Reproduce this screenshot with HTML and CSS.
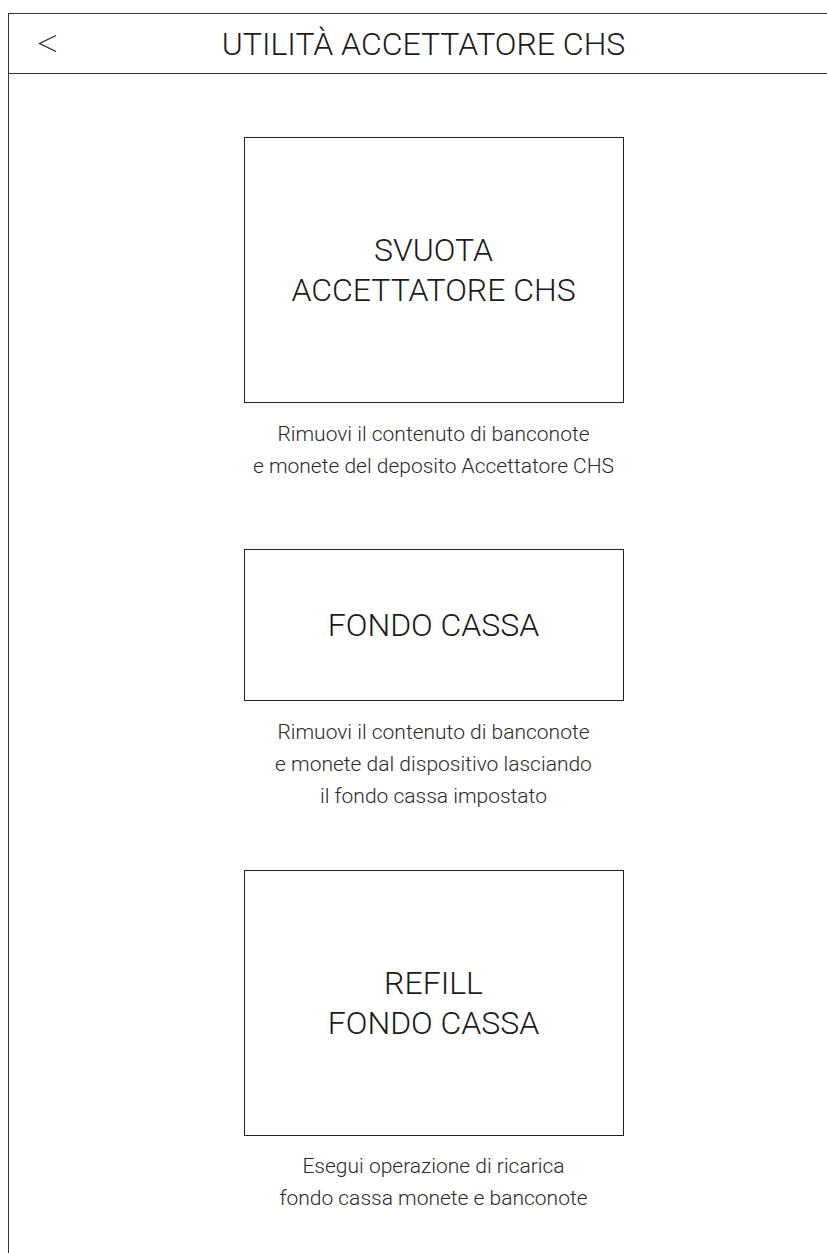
FILE: index.html
```html
<!doctype html>
<html>
<head>
<meta charset="utf-8">
<title>Utilità Accettatore CHS</title>
<link rel="stylesheet" href="styles.css">
</head>

<body>
<div class="frame">
	<div class="header">
		<a class="back" href="#"><svg width="20" height="20" viewBox="0 0 20 20"><polyline points="18,1.5 1.5,9.5 18,17.5" fill="none" stroke="#222" stroke-width="1.2"/></svg></a>
		<h1 class="title">UTILITÀ ACCETTATORE CHS</h1>
	</div>
	<div class="content">
		<div class="item item-1">
			<a class="tile tile-big" href="#">SVUOTA<br>ACCETTATORE CHS</a>
			<p class="desc">Rimuovi il contenuto di banconote<br>e monete del deposito Accettatore CHS</p>
		</div>
		<div class="item item-2">
			<a class="tile tile-small" href="#">FONDO CASSA</a>
			<p class="desc">Rimuovi il contenuto di banconote<br>e monete dal dispositivo lasciando<br>il fondo cassa impostato</p>
		</div>
		<div class="item item-3">
			<a class="tile tile-big" href="#">REFILL<br>FONDO CASSA</a>
			<p class="desc">Esegui operazione di ricarica<br>fondo cassa monete e banconote</p>
		</div>
	</div>
</div>
</body>
</html>
```

FILE: styles.css
```css
* {margin:0; padding:0; box-sizing:border-box;}
html, body {background:#fff; overflow:hidden;}
body {font-family:Roboto, "Liberation Sans", sans-serif; font-weight:300; color:#1a1a1a;}
a {color:inherit; text-decoration:none;}

.frame {width:851px; min-height:1300px; margin:13px 0 0 8px; border:1px solid #333;}

.header {display:flex; align-items:center; height:60px; border-bottom:1px solid #333;}
.back {display:flex; width:60px; padding-left:29px;}
.title {flex:1; padding-right:80px; text-align:center; font-size:32px; font-weight:300;}

.content {display:flex; flex-direction:column; align-items:center; padding-top:63px;}
.item {display:flex; flex-direction:column; align-items:center;}

.tile {display:flex; align-items:center; justify-content:center; width:380px; border:1px solid #222; text-align:center; font-size:32px; line-height:40px;}
.tile-big {height:266px;}
.tile-small {height:152px;}

.desc {padding-top:15px; text-align:center; font-size:21px; line-height:32px; color:#2a2a2a;}
.item-1 .desc {margin-bottom:67px;}
.item-2 .desc {margin-bottom:58px;}
.item-3 .desc {padding-top:14px;}
```
